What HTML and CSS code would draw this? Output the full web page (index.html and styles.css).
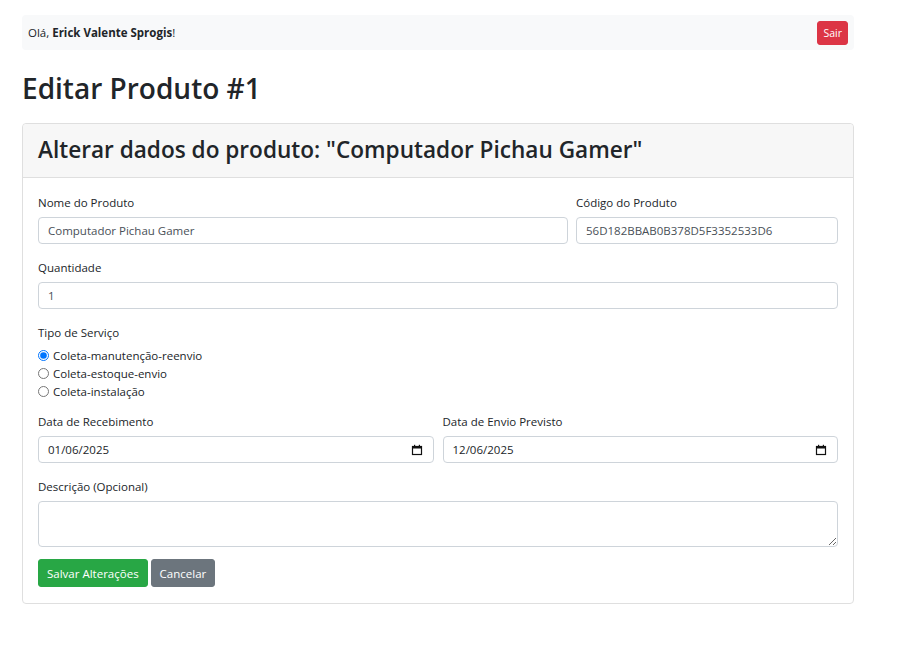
FILE: index.html
```html
<!DOCTYPE html>
<html lang="pt-BR">
<head>
<meta charset="utf-8">
<title>Editar Produto</title>
<link rel="stylesheet" href="styles.css">
</head>
<body>
<div class="page">
  <nav class="topbar">
    <span class="greet">Olá, <strong>Erick Valente Sprogis</strong>!</span>
    <button class="btn btn-danger btn-sm" type="button">Sair</button>
  </nav>

  <h1 class="title">Editar Produto #1</h1>

  <div class="card">
    <div class="card-header">
      <h3 class="card-title">Alterar dados do produto: "Computador Pichau Gamer"</h3>
    </div>
    <div class="card-body">
      <form class="form">
        <div class="row row-8-4">
          <div class="field">
            <label class="label">Nome do Produto</label>
            <input class="control" type="text" value="Computador Pichau Gamer">
          </div>
          <div class="field">
            <label class="label">Código do Produto</label>
            <input class="control" type="text" value="56D182BBAB0B378D5F3352533D6">
          </div>
        </div>

        <div class="field">
          <label class="label">Quantidade</label>
          <input class="control" type="text" value="1">
        </div>

        <div class="field field-radios">
          <label class="label">Tipo de Serviço</label>
          <div class="radios">
            <label class="radio"><input type="radio" name="tipo" checked><span>Coleta-manutenção-reenvio</span></label>
            <label class="radio"><input type="radio" name="tipo"><span>Coleta-estoque-envio</span></label>
            <label class="radio"><input type="radio" name="tipo"><span>Coleta-instalação</span></label>
          </div>
        </div>

        <div class="row row-half">
          <div class="field">
            <label class="label">Data de Recebimento</label>
            <div class="control date">
              <input class="date-text" type="text" value="01/06/2025">
              <svg class="cal" width="12" height="12" viewBox="0 0 12 12"><rect x="1.5" y="2.5" width="9" height="8" fill="none" stroke="#111" stroke-width="1.2"/><rect x="1.5" y="2.5" width="9" height="2" fill="#111"/><rect x="3" y="0.8" width="1.2" height="2.2" fill="#111"/><rect x="7.8" y="0.8" width="1.2" height="2.2" fill="#111"/></svg>
            </div>
          </div>
          <div class="field">
            <label class="label">Data de Envio Previsto</label>
            <div class="control date">
              <input class="date-text" type="text" value="12/06/2025">
              <svg class="cal" width="12" height="12" viewBox="0 0 12 12"><rect x="1.5" y="2.5" width="9" height="8" fill="none" stroke="#111" stroke-width="1.2"/><rect x="1.5" y="2.5" width="9" height="2" fill="#111"/><rect x="3" y="0.8" width="1.2" height="2.2" fill="#111"/><rect x="7.8" y="0.8" width="1.2" height="2.2" fill="#111"/></svg>
            </div>
          </div>
        </div>

        <div class="field field-last">
          <label class="label">Descrição (Opcional)</label>
          <textarea class="control textarea"></textarea>
        </div>

        <div class="actions">
          <button class="btn btn-success" type="button">Salvar Alterações</button>
          <button class="btn btn-secondary" type="button">Cancelar</button>
        </div>
      </form>
    </div>
  </div>
</div>
</body>
</html>
```

FILE: styles.css
```css
* { box-sizing: border-box; }

body {
  margin: 0;
  font-family: "Open Sans", "Noto Sans", sans-serif;
  color: #212529;
  background: #fff;
}

.page {
  width: 832px;
  margin: 15px 0 0 22px;
}

.topbar {
  display: flex;
  align-items: center;
  justify-content: space-between;
  height: 35px;
  padding: 0 6px;
  background: #f8f9fa;
  border-radius: 4px;
}

.greet {
  font-size: 11.5px;
}

.greet strong { font-weight: 700; }

.btn {
  font-family: inherit;
  border: 1px solid transparent;
  border-radius: 3px;
  color: #fff;
  cursor: pointer;
}

.btn-sm {
  height: 24px;
  padding: 0 5px;
  font-size: 10.5px;
}

.btn-danger { background: #dc3545; border-color: #dc3545; }
.btn-success { background: #28a745; border-color: #28a745; }
.btn-secondary { background: #6c757d; border-color: #6c757d; }

.title {
  margin: 20px 0 17px;
  font-size: 28px;
  font-weight: 600;
  line-height: 36px;
}

.card {
  border: 1px solid #dfdfdf;
  border-radius: 4px;
  background: #fff;
}

.card-header {
  padding: 11px 15px 13px;
  background: #f7f7f7;
  border-bottom: 1px solid #dfdfdf;
  border-radius: 4px 4px 0 0;
}

.card-title {
  margin: 0;
  font-size: 22.6px;
  font-weight: 600;
  line-height: 29px;
}

.card-body {
  padding: 16px 15px 16px;
}

.form {
  display: flex;
  flex-direction: column;
}

.row {
  display: grid;
  column-gap: 8px;
}

.row-8-4 { grid-template-columns: 530px 1fr; }
.row-half { grid-template-columns: 1fr 1fr; column-gap: 9px; }

.field {
  display: flex;
  flex-direction: column;
  margin-bottom: 15px;
}

.field-radios { margin-bottom: 13px; }
.field-last { margin-bottom: 12px; }

.label {
  font-size: 11.5px;
  line-height: 17px;
  margin-bottom: 6px;
}

.control {
  height: 27px;
  width: 100%;
  padding: 0 9px;
  font-family: inherit;
  font-size: 11.5px;
  color: #495057;
  background: #fff;
  border: 1px solid #ced4da;
  border-radius: 4px;
  outline: none;
}

.date {
  display: flex;
  align-items: center;
  padding-right: 10px;
}

.date-text {
  flex: 1;
  min-width: 0;
  border: 0;
  padding: 0;
  font-family: inherit;
  font-size: 11.5px;
  color: #212529;
  background: transparent;
  outline: none;
}

.cal { flex: none; }

.radios {
  display: flex;
  flex-direction: column;
  margin-top: -1px;
}

.radio {
  display: flex;
  align-items: center;
  height: 18px;
  font-size: 11.5px;
}

.radio input {
  margin: 0 4px 0 0;
  width: 11px;
  height: 11px;
}

.textarea {
  height: 46px;
  padding: 6px 9px;
  resize: vertical;
}

.actions {
  display: flex;
  gap: 3px;
}

.actions .btn {
  height: 28px;
  padding: 0 8px;
  font-size: 11.5px;
}
```
